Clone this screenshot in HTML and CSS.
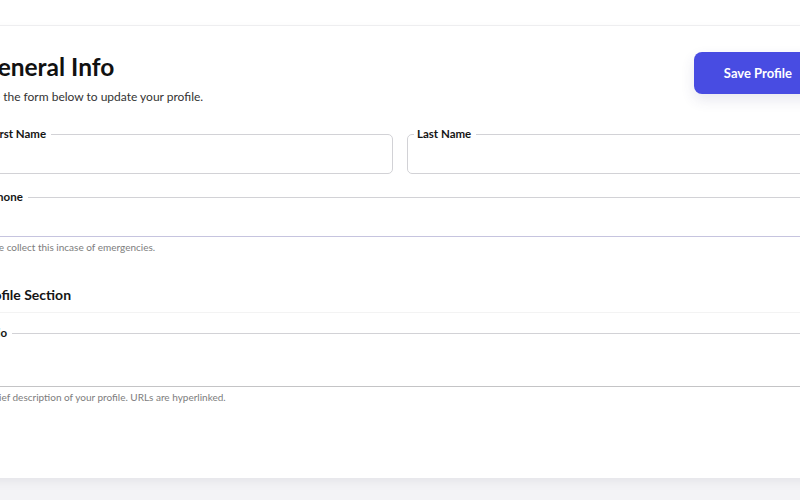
FILE: index.html
```html
<!DOCTYPE html>
<html lang="en">
<head>
<meta charset="utf-8">
<title>General Info</title>
<link rel="stylesheet" href="styles.css">
</head>
<body>
<div class="topbar"></div>
<div class="page">
  <main class="card">
    <div class="header">
      <div class="titles">
        <h1 class="title">General Info</h1>
        <p class="subtitle">Use the form below to update your profile.</p>
      </div>
      <button class="save-btn" type="button">Save Profile</button>
    </div>

    <div class="row">
      <fieldset class="field">
        <legend class="field-label">First Name</legend>
        <input class="field-input" type="text">
      </fieldset>
      <fieldset class="field">
        <legend class="field-label">Last Name</legend>
        <input class="field-input" type="text">
      </fieldset>
    </div>

    <fieldset class="field field-phone">
      <legend class="field-label">Phone</legend>
      <input class="field-input" type="text">
    </fieldset>
    <p class="helper">We collect this incase of emergencies.</p>

    <h2 class="section-title">Profile Section</h2>
    <div class="divider"></div>

    <fieldset class="field field-bio">
      <legend class="field-label">Bio</legend>
      <textarea class="field-input field-textarea"></textarea>
    </fieldset>
    <p class="helper">Brief description of your profile. URLs are hyperlinked.</p>
  </main>
</div>
</body>
</html>
```
FILE: styles.css
```css
* { box-sizing: border-box; }

html, body {
  margin: 0;
  padding: 0;
}

body {
  width: 800px;
  height: 500px;
  overflow: hidden;
  background: #f3f3f6;
  font-family: "Lato", "Noto Sans", sans-serif;
  color: #151515;
}

.topbar {
  height: 26px;
  background: #ffffff;
  border-bottom: 1px solid #f0f0f2;
}

.page {
  margin-left: -60px;
  width: 920px;
}

.card {
  background: #ffffff;
  padding: 26px 40px 74px;
  box-shadow: 0 4px 10px rgba(20, 20, 40, 0.06);
}

.header {
  display: flex;
  justify-content: space-between;
  align-items: flex-start;
}

.title {
  margin: 0;
  font-size: 24.5px;
  line-height: 30px;
  font-weight: 700;
  color: #111;
}

.subtitle {
  margin: 6px 0 0;
  font-size: 12px;
  line-height: 18px;
  color: #333;
}

.save-btn {
  height: 42px;
  padding: 0 28px 0 30px;
  border: none;
  border-radius: 8px;
  background: #484ce2;
  color: #ffffff;
  font-family: inherit;
  font-size: 13px;
  font-weight: 700;
  box-shadow: 0 6px 14px rgba(60, 60, 120, 0.12);
}

.row {
  display: grid;
  grid-template-columns: 1fr 1fr;
  gap: 14px;
  margin-top: 21px;
}

.field {
  margin: 0;
  padding: 0 6px;
  border: 1px solid #d2d2d6;
  border-radius: 5px;
  min-width: 0;
}

.field-label {
  padding: 0 5px 0 3px;
  font-size: 11.5px;
  line-height: 14px;
  font-weight: 700;
  color: #151515;
}

.field-input {
  display: block;
  width: 100%;
  height: 32px;
  margin: 0;
  border: none;
  outline: none;
  background: transparent;
  font-family: inherit;
}

.field-phone {
  margin-top: 16px;
  border-bottom-color: #c6c4df;
}

.field-bio {
  margin-top: 13px;
  border-bottom-color: #c4c4c6;
}

.field-textarea {
  height: 46px;
  resize: none;
}

.helper {
  margin: 3px 0 0 9px;
  font-size: 10px;
  line-height: 14px;
  color: #7d7d7d;
}

.section-title {
  margin: 31px 0 0;
  font-size: 14px;
  line-height: 20px;
  font-weight: 700;
  color: #151515;
}

.divider {
  margin-top: 7px;
  height: 1px;
  background: #f3f3f3;
}
```
